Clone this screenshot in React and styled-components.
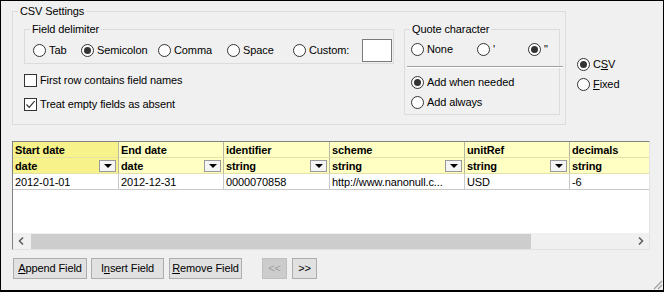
import { createGlobalStyle } from "styled-components";
import styled from "styled-components";

const Global = createGlobalStyle`
  html, body { margin: 0; padding: 0; background: #f0f0f0; }
  * { box-sizing: border-box; }
`;

const Window = styled.div`
  position: relative;
  width: 664px;
  height: 292px;
  border: 1px solid #000;
  border-bottom-width: 2px;
  background: #f0f0f0;
  padding: 10px 0 0 11px;
  font-family: "Liberation Sans", Arial, sans-serif;
  font-size: 11px;
  letter-spacing: -0.1px;
  color: #000;
  display: flex;
  flex-direction: column;
`;

const TopRow = styled.div`
  display: flex;
  align-items: flex-start;
`;

const Group = styled.div`
  position: relative;
  border: 1px solid #dcdcdc;
  width: ${(p) => p.$w}px;
  height: ${(p) => p.$h}px;
  padding: ${(p) => p.$pad};
  display: flex;
  flex-direction: ${(p) => (p.$row ? "row" : "column")};
  align-items: flex-start;
  flex-shrink: 0;
`;

const Legend = styled.span`
  position: absolute;
  top: -7px;
  left: 5px;
  padding: 0 2px;
  line-height: 13px;
  background: #f0f0f0;
  white-space: nowrap;
`;

const Column = styled.div`
  display: flex;
  flex-direction: column;
  width: ${(p) => p.$w}px;
`;

const OptionRow = styled.div`
  display: flex;
  align-items: center;
  height: ${(p) => p.$h || 13}px;
  margin-top: ${(p) => p.$mt || 0}px;
`;

const Option = styled.label`
  display: flex;
  align-items: center;
  gap: 3px;
  width: ${(p) => (p.$w ? `${p.$w}px` : "auto")};
  line-height: 13px;
  white-space: nowrap;
  flex-shrink: 0;
`;

const Radio = styled.span`
  width: 13px;
  height: 13px;
  border-radius: 50%;
  border: 1px solid #333;
  background: #fff;
  display: flex;
  align-items: center;
  justify-content: center;
  flex-shrink: 0;
  &::after {
    content: "";
    width: 7px;
    height: 7px;
    border-radius: 50%;
    background: ${(p) => (p.$on ? "#333" : "transparent")};
  }
`;

const Check = styled.span`
  width: 13px;
  height: 13px;
  border: 1px solid #333;
  background: #fff;
  display: flex;
  align-items: center;
  justify-content: center;
  flex-shrink: 0;
`;

const TextBox = styled.div`
  width: 30px;
  height: 23px;
  border: 1px solid #7a7a7a;
  background: #fff;
`;

const CheckRow = styled.div`
  display: flex;
  align-items: center;
  gap: 3px;
  height: 24px;
  line-height: 13px;
`;

const Separator = styled.div`
  height: 2px;
  margin: 10px -4px 0 -4px;
  border-top: 1px solid #a0a0a0;
  border-bottom: 1px solid #fff;
  align-self: stretch;
`;

const SideOptions = styled.div`
  display: flex;
  flex-direction: column;
  gap: 7px;
  margin: 47px 0 0 11px;
`;

const Table = styled.div`
  margin-top: 16px;
  width: 638px;
  height: 109px;
  border: 1px solid;
  border-color: #828282 #e3e3e3 #e3e3e3 #828282;
  display: flex;
  flex-direction: column;
`;

const GridArea = styled.div`
  flex: 1;
  background: #fff;
`;

const Row = styled.div`
  display: flex;
  height: 16px;
`;

const Cell = styled.div`
  position: relative;
  width: ${(p) => (p.$w ? `${p.$w}px` : "auto")};
  flex: ${(p) => (p.$w ? "none" : "1")};
  height: 16px;
  border-right: 1px solid ${(p) => (p.$head ? "#b8b8a0" : "#c8c8c8")};
  border-bottom: 1px solid ${(p) => (p.$head ? "#e4e2a8" : "#c8c8c8")};
  background: ${(p) => (p.$sel ? "#f7f38a" : p.$head ? "#ffffc4" : "#fff")};
  font-weight: ${(p) => (p.$head ? "bold" : "normal")};
  padding: 1px 0 0 2px;
  line-height: 14px;
  white-space: nowrap;
  overflow: hidden;
  &:last-child { border-right: none; }
`;

const DropButton = styled.span`
  position: absolute;
  right: 2px;
  top: 2px;
  width: 17px;
  height: 12px;
  border: 1px solid #9a9a9a;
  background: #f4f4f4;
  display: flex;
  align-items: center;
  justify-content: center;
  &::after {
    content: "";
    border-left: 4px solid transparent;
    border-right: 4px solid transparent;
    border-top: 4px solid #000;
  }
`;

const ScrollBar = styled.div`
  height: 16px;
  background: #f0f0f0;
  display: flex;
  align-items: center;
`;

const ScrollArrow = styled.div`
  width: 17px;
  height: 16px;
  display: flex;
  align-items: center;
  justify-content: center;
  flex-shrink: 0;
`;

const Thumb = styled.div`
  width: 500px;
  height: 15px;
  background: #cdcdcd;
  margin-left: 1px;
`;

const Track = styled.div`
  flex: 1;
`;

const Buttons = styled.div`
  display: flex;
  align-items: center;
  margin: 8px 0 0 1px;
`;

const Button = styled.div`
  width: ${(p) => p.$w}px;
  height: 21px;
  margin-left: ${(p) => p.$ml || 0}px;
  border: 1px solid ${(p) => (p.$off ? "#bfbfbf" : "#adadad")};
  background: ${(p) => (p.$off ? "#cccccc" : "#e1e1e1")};
  color: ${(p) => (p.$off ? "#a0a0a0" : "#000")};
  display: flex;
  align-items: center;
  justify-content: center;
  line-height: 13px;
  white-space: nowrap;
`;

const Grip = styled.svg`
  position: absolute;
  right: 0;
  bottom: 0;
`;

const columns = [
  { name: "Start date", type: "date", value: "2012-01-01", w: 106, sel: true },
  { name: "End date", type: "date", value: "2012-12-31", w: 105 },
  { name: "identifier", type: "string", value: "0000070858", w: 106 },
  { name: "scheme", type: "string", value: "http://www.nanonull.c...", w: 135 },
  { name: "unitRef", type: "string", value: "USD", w: 105 },
  { name: "decimals", type: "string", value: "-6" },
];

function Chevron({ left }) {
  return (
    <svg width="7" height="8" viewBox="0 0 7 8">
      <path
        d={left ? "M5 0.5 L1.5 4 L5 7.5" : "M2 0.5 L5.5 4 L2 7.5"}
        fill="none"
        stroke="#606060"
        strokeWidth="1.6"
      />
    </svg>
  );
}

export default function App() {
  return (
    <>
      <Global />
      <Window>
        <TopRow>
          <Group $w={554} $h={114} $pad="17px 0 0 11px" $row>
            <Legend>CSV Settings</Legend>
            <Column $w={370}>
              <Group $w={370} $h={35} $pad="9px 0 0 8px" $row>
                <Legend>Field delimiter</Legend>
                <OptionRow $h={23}>
                  <Option $w={48}><Radio /><span>Tab</span></Option>
                  <Option $w={77}><Radio $on /><span>Semicolon</span></Option>
                  <Option $w={69}><Radio /><span>Comma</span></Option>
                  <Option $w={66}><Radio /><span>Space</span></Option>
                  <Option $w={69}><Radio /><span>Custom:</span></Option>
                  <TextBox />
                </OptionRow>
              </Group>
              <CheckRow style={{ marginTop: 4 }}>
                <Check />
                <span>First row contains field names</span>
              </CheckRow>
              <CheckRow>
                <Check>
                  <svg width="11" height="11" viewBox="0 0 11 11">
                    <path d="M1.5 5.5 L4.2 8.3 L9.6 2.2" fill="none" stroke="#333" strokeWidth="1.2" />
                  </svg>
                </Check>
                <span>Treat empty fields as absent</span>
              </CheckRow>
            </Column>
            <Group $w={156} $h={86} $pad="13px 0 0 6px" style={{ marginLeft: 10 }}>
              <Legend>Quote character</Legend>
              <OptionRow>
                <Option $w={66}><Radio /><span>None</span></Option>
                <Option $w={51}><Radio /><span>'</span></Option>
                <Option><Radio $on /><span>"</span></Option>
              </OptionRow>
              <Separator />
              <OptionRow $mt={8}>
                <Option><Radio $on /><span>Add when needed</span></Option>
              </OptionRow>
              <OptionRow $mt={7}>
                <Option><Radio /><span>Add always</span></Option>
              </OptionRow>
            </Group>
          </Group>
          <SideOptions>
            <Option><Radio $on /><span>C<u>S</u>V</span></Option>
            <Option><Radio /><span><u>F</u>ixed</span></Option>
          </SideOptions>
        </TopRow>

        <Table>
          <GridArea>
            <Row>
              {columns.map((c) => (
                <Cell key={c.name} $w={c.w} $head $sel={c.sel}>{c.name}</Cell>
              ))}
            </Row>
            <Row>
              {columns.map((c, i) => (
                <Cell key={c.name} $w={c.w} $head $sel={c.sel}>
                  {c.type}
                  {i < columns.length - 1 && <DropButton />}
                </Cell>
              ))}
            </Row>
            <Row>
              {columns.map((c) => (
                <Cell key={c.name} $w={c.w}>{c.value}</Cell>
              ))}
            </Row>
          </GridArea>
          <ScrollBar>
            <ScrollArrow><Chevron left /></ScrollArrow>
            <Thumb />
            <Track />
            <ScrollArrow><Chevron /></ScrollArrow>
          </ScrollBar>
        </Table>

        <Buttons>
          <Button $w={74}><span><u>A</u>ppend Field</span></Button>
          <Button $w={73} $ml={4}><span>I<u>n</u>sert Field</span></Button>
          <Button $w={73} $ml={5}><span><u>R</u>emove Field</span></Button>
          <Button $w={25} $ml={20} $off>&lt;&lt;</Button>
          <Button $w={25} $ml={5}>&gt;&gt;</Button>
        </Buttons>

        <Grip width="12" height="12" viewBox="0 0 12 12">
          <path d="M11 3 L3 11 M11 7 L7 11 M11 11 L11 11" stroke="#a0a0a0" strokeWidth="1.2" />
        </Grip>
      </Window>
    </>
  );
}
